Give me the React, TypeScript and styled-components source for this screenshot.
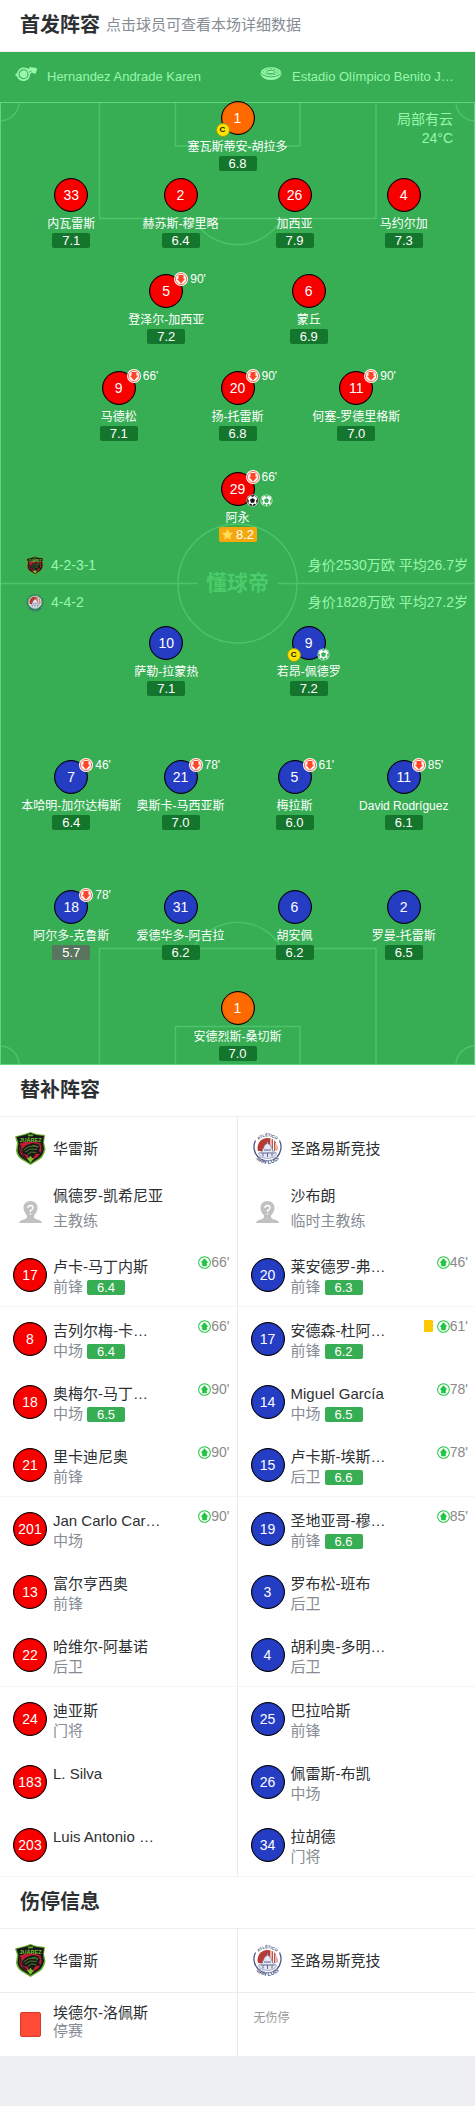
import React from 'react';
import styled, { createGlobalStyle } from 'styled-components';

const GlobalStyle = createGlobalStyle`
  * { box-sizing: border-box; }
  html { background: #eeeff1; }
  body {
    margin: 0;
    font-family: "Liberation Sans", "Noto Sans CJK SC", sans-serif;
    color: #2d3033;
  }
  h2, p, ul { margin: 0; padding: 0; }
  ul { list-style: none; }
  a { color: inherit; text-decoration: none; }
  svg { display: block; flex: none; }
`;

const Page = styled.main`
  background: #fff;
`;

/* ---------- section headings ---------- */

const SectionHead = styled.header`
  display: flex;
  align-items: center;
  gap: 6px;
  height: 52px;
  padding: 0 20px 2px;
  border-bottom: 1px solid #eeeeee;
`;

const Title = styled.h2`
  font-size: 20px;
  line-height: 28px;
  font-weight: 700;
`;

const Hint = styled.p`
  font-size: 15px;
  line-height: 20px;
  color: #868c94;
`;

/* ---------- pitch ---------- */

const PitchPanel = styled.section`
  background: #37ae54;
  color: #fff;
`;

const MatchBar = styled.div`
  display: grid;
  grid-template-columns: 245fr 230fr;
  height: 49px;
  color: #98f7ac;
`;

const MatchFact = styled.div`
  display: flex;
  align-items: center;
  gap: 10px;
  padding-left: 15px;
  min-width: 0;
  font-size: 13px;
  line-height: 18px;
  white-space: nowrap;

  svg { margin-bottom: 6px; }
`;

const Field = styled.div`
  position: relative;
  padding-bottom: 4px;
`;

const Markings = styled.svg`
  position: absolute;
  inset: 0;
  width: 100%;
  height: 100%;
`;

const Weather = styled.p`
  position: absolute;
  top: 9px;
  right: 22px;
  font-size: 14px;
  line-height: 19px;
  text-align: right;
  color: #98f7ac;
`;

const Watermark = styled.span`
  position: absolute;
  top: 50%;
  left: 50%;
  transform: translate(-50%, -50%);
  font-size: 21px;
  line-height: 24px;
  font-weight: 700;
  color: #4bcb69;
`;

const Half = styled.div`
  position: relative;
`;

const TeamLine = styled.div<{ $before: number }>`
  display: flex;
  align-items: center;
  gap: 7px;
  height: 20px;
  margin-top: ${(p) => p.$before}px;
  padding: 0 7px 0 26px;
  font-size: 14px;
  line-height: 20px;
  color: #98f7ac;
`;

const TeamValue = styled.span`
  margin-left: auto;
`;

const spotWidth: Record<number, number> = { 1: 40, 2: 30, 3: 25, 4: 23 };

const Line = styled.ul<{ $before: number; $count: number }>`
  display: flex;
  justify-content: center;
  margin-top: ${(p) => p.$before}px;

  > li { width: ${(p) => spotWidth[p.$count]}%; }
  > li:nth-child(3):nth-last-child(2) { margin-left: 1%; }
`;

const Spot = styled.a`
  display: flex;
  flex-direction: column;
  align-items: center;
  white-space: nowrap;
`;

const shirtColors = { red: '#f80000', blue: '#253dc3', keeper: '#ff6a00' };
type Shirt = keyof typeof shirtColors;

const Disc = styled.span<{ $shirt: Shirt }>`
  position: relative;
  display: flex;
  flex: none;
  align-items: center;
  justify-content: center;
  width: 34px;
  height: 34px;
  border: 1px solid #000;
  border-radius: 50%;
  background: ${(p) => shirtColors[p.$shirt]};
  box-shadow: inset 0 0 1px #000;
  color: #fff;
  font-size: 14px;
  line-height: 16px;
`;

const SpotName = styled.span`
  padding-top: 3px;
  font-size: 12px;
  line-height: 18px;
`;

const ratingColors = { pitch: '#14752c', low: '#59755f', best: '#f5a80c', bench: '#37ae54' };
type RatingTone = keyof typeof ratingColors;

const Rating = styled.span<{ $tone: RatingTone }>`
  display: flex;
  align-items: center;
  justify-content: center;
  gap: 2px;
  width: 38px;
  height: 15px;
  border-radius: 2px;
  background: ${(p) => ratingColors[p.$tone]};
  color: #fff;
  font-size: 13px;
  line-height: 15px;
`;

const OffMark = styled.span`
  position: absolute;
  top: -3px;
  left: 24px;
  display: flex;
  align-items: center;
  gap: 2px;
  font-size: 12px;
  line-height: 14px;
`;

const CaptainMark = styled.span`
  position: absolute;
  top: 21px;
  left: -6px;
  width: 14px;
  height: 14px;
  border: 1px solid #9b9a10;
  border-radius: 50%;
  background: #ffe300;
  color: #111;
  font-size: 8px;
  line-height: 12px;
  font-weight: 700;
  text-align: center;
`;

const BallMarks = styled.span`
  position: absolute;
  top: 21px;
  left: 24px;
  display: flex;
  gap: 1px;
`;

/* ---------- bench and absences ---------- */

const Columns = styled.div`
  display: grid;
  grid-template-columns: 1fr 1fr;
`;

const Column = styled.ul`
  min-width: 0;

  &:first-child { border-right: 1px solid #ebebeb; }
`;

const BenchItem = styled.li`
  &:nth-child(3n) { border-bottom: 1px solid #f5f5f6; }
`;

const AbsenceItem = styled.li`
  &:first-child { border-bottom: 1px solid #ebebeb; }
`;

const Row = styled.div`
  display: flex;
  align-items: center;
  gap: 6px;
  height: 63px;
  padding: 0 7px 0 13px;
  white-space: nowrap;
`;

const IconSlot = styled.span`
  display: flex;
  flex: none;
  justify-content: center;
  width: 34px;
`;

const Lines = styled.div<{ $pitch: number; $top?: number }>`
  align-self: ${(p) => (p.$top ? 'flex-start' : 'center')};
  padding-top: ${(p) => p.$top ?? 0}px;
  font-size: 15px;
  line-height: ${(p) => p.$pitch}px;
`;

const Role = styled.div`
  display: flex;
  align-items: center;
  gap: 4px;
  color: #868c94;
`;

const BenchLines = styled(Lines)`
  ${Role} { line-height: 20px; }
`;

const Events = styled.div`
  display: flex;
  align-self: flex-start;
  align-items: center;
  margin: 11px 0 0 auto;
  color: #8a8a8a;
  font-size: 14px;
  line-height: 16px;
`;

const YellowCard = styled.i`
  width: 9px;
  height: 12px;
  margin-right: 4px;
  border-radius: 1px;
  background: #ffc900;
`;

const RedCard = styled.i`
  width: 21px;
  height: 25px;
  border: 1px solid #d93a28;
  border-radius: 2px;
  background: #ff4a35;
`;

const NoAbsence = styled.p`
  padding: 16px 0 0 16px;
  font-size: 12px;
  line-height: 18px;
  color: #999;
`;

/* ---------- drawings ---------- */

const Swap = ({ dir, size }: { dir: 'up' | 'down'; size: number }) => {
  const tint = dir === 'up' ? '#22c443' : '#ff4527';
  return (
    <svg width={size} height={size} viewBox="0 0 14 14" aria-hidden="true">
      <circle cx="7" cy="7" r="7" fill="#fff" />
      <circle cx="7" cy="7" r={dir === 'up' ? 6.3 : 5.6} fill="none" stroke={tint} strokeWidth={dir === 'up' ? 1.1 : 0.8} />
      <path
        d="M7 2.5 11.2 7.2H9.5V11H4.5V7.2H2.8Z"
        fill={tint}
        transform={dir === 'down' ? 'rotate(180 7 7)' : undefined}
      />
    </svg>
  );
};

const Ball = ({ ink }: { ink: string }) => (
  <svg width="13" height="13" viewBox="0 0 26 26" aria-hidden="true">
    <circle cx="13" cy="13" r="12" fill="#fff" />
    <circle cx="13" cy="13" r="10.6" fill="none" stroke={ink} strokeWidth="1.2" />
    <g fill={ink}>
      <path d="M13 8 18 11.600 16.200 17.400H9.800L8 11.600Z" />
      <path d="M8.500 3.600Q13 1.500 17.500 3.600L13 6Z" />
      <path d="M23.400 9Q24.300 14 21.500 18.500L20 13.500Z" />
      <path d="M2.600 9Q1.700 14 4.500 18.500L6 13.500Z" />
      <path d="M7 21.500 8 18.800 12 21 11.500 23.600Q9 23.300 7 21.500Z" />
      <path d="M19 21.500 18 18.800 14 21 14.500 23.600Q17 23.300 19 21.500Z" />
    </g>
  </svg>
);

const Star = () => (
  <svg width="13" height="13" viewBox="0 0 26 26" aria-hidden="true">
    <path
      d="M13 1 16.600 8.600 25 9.700 18.900 15.500 20.400 24 13 20 5.600 24 7.100 15.500 1 9.700 9.400 8.600Z"
      fill="#ffdf55"
      stroke="#ff9d1c"
      strokeWidth="1"
      strokeLinejoin="round"
    />
  </svg>
);

const Whistle = () => (
  <svg width="22" height="14" viewBox="0 0 44 28" aria-hidden="true">
    <path d="M17 1C23 1 26 4 28 4L29 0 43 2 44 5 41 14 33 11 30 15C30 23 24 28 17 28 11 28 6 25 4 19L0 16 4 12C6 5 11 1 17 1Z" fill="#98f7ac" />
    <circle cx="17" cy="14.500" r="9" fill="none" stroke="#37ae54" strokeWidth="2.200" />
    <path d="M28 10 33 8" stroke="#37ae54" strokeWidth="1.500" />
  </svg>
);

const Stadium = () => (
  <svg width="22" height="13" viewBox="0 0 44 26" aria-hidden="true">
    <path d="M0 11 7 17Q22 24 37 17L44 11 42 17Q35 26 22 26 9 26 2 17Z" fill="#98f7ac" />
    <ellipse cx="22" cy="10" rx="20" ry="9.500" fill="#98f7ac" />
    <ellipse cx="22" cy="9.500" rx="15" ry="6" fill="none" stroke="#37ae54" strokeWidth="1.400" strokeDasharray="6 2" />
    <ellipse cx="22" cy="10" rx="9" ry="3.400" fill="none" stroke="#37ae54" strokeWidth="1.800" />
    <path d="M2 14Q22 26 42 14" fill="none" stroke="#37ae54" strokeWidth="1.200" />
  </svg>
);

const JuarezCrest = ({ width, height }: { width: number; height: number }) => (
  <svg width={width} height={height} viewBox="0 0 62 66" preserveAspectRatio="none" aria-hidden="true">
    <path d="M31 0 43 4 60 6 58 20 61 34Q58 52 44 58L31 66 18 58Q4 52 2 38L4 22 0 9 19 4Z" fill="#66ad25" />
    <path d="M31 2 42 6 58 8 56 21 58 34Q55 50 42 56L31 63 20 56Q7 50 5 37L7 22 3 10 20 6Z" fill="#17191a" />
    <path d="M10 23Q31 15 52 23L53 36Q50 48 40 53L31 58 22 53Q10 47 9 36Z" fill="#c51c35" />
    <path d="M14 34 22 27 34 22 46 24 50 30 48 38 52 44 42 43 36 52 31 58 26 47 15 42Z" fill="#17191a" />
    <path d="M17 36 28 29 41 28M20 40 31 34 44 35M25 45 33 40 42 41M35 27 46 29 43 32" fill="none" stroke="#66ad25" strokeWidth="1.400" />
    <path d="M11 26 12 39 22 50M51 26 49 24M14 46 24 52" fill="none" stroke="#17191a" strokeWidth="2" />
    <path d="M31 47 34 52 38 53 31 62 24 53 28 52Z" fill="#76c52e" />
    <path d="M25 5H37L35 9H27Z" fill="#66ad25" />
    <path d="M7 13Q31 5 55 13V21Q31 13 7 21Z" fill="#17191a" />
    <text x="31" y="20" textAnchor="middle" fontSize="11" fontWeight="700" fontFamily="Liberation Sans" fill="#7cc62f">JUÁREZ</text>
  </svg>
);

const SanLuisCrest = ({ width, height }: { width: number; height: number }) => (
  <svg width={width} height={height} viewBox="0 0 62 66" preserveAspectRatio="none" aria-hidden="true">
    <defs>
      <path id="crest-top" d="M8 24A25 25 0 0 1 54 24" />
      <path id="crest-bottom" d="M3 46A31 31 0 0 0 59 46" />
    </defs>
    <circle cx="31" cy="32" r="22" fill="#fff" />
    <path d="M31 12A20 20 0 0 1 50 38H12A20 20 0 0 1 31 12Z" fill="#b83a32" />
    <path d="M38 13V38M43 16V38M48 22V38" stroke="#fff" strokeWidth="2.500" />
    <path d="M31 16 32 23Q39 26 39 33H41V38L49 42Q47 52 31 53 15 52 13 42L21 38V33H23Q23 26 30 23Z" fill="#e7e9f2" stroke="#57608c" strokeWidth="1" />
    <path d="M31 42V50M24 36H38M17 42H45M22 43V49M40 43V49" stroke="#4c5684" strokeWidth="1.800" />
    <path d="M7 17A29 29 0 0 0 12 50M55 17A29 29 0 0 1 50 50" fill="none" stroke="#414c80" strokeWidth="2.400" />
    <path d="M11 49A27 27 0 0 0 51 49" fill="none" stroke="#414c80" strokeWidth="1.200" />
    <g fontFamily="Liberation Sans" fontWeight="700" fill="#414c80" textAnchor="middle">
      <text fontSize="8"><textPath href="#crest-top" startOffset="50%">ATLÉTICO</textPath></text>
      <text fontSize="11"><textPath href="#crest-bottom" startOffset="50%">SAN LUIS</textPath></text>
    </g>
  </svg>
);

const CoachFigure = () => (
  <svg width="23" height="22" viewBox="0 0 46 44" aria-hidden="true">
    <path d="M23 0C32 0 37 6 37 14 37 21 33 25 30 29V33Q32 36 40 38 46 40 46 44H0Q0 40 6 38 14 36 16 33V29C13 25 9 21 9 14 9 6 14 0 23 0Z" fill="#c1c1c1" />
    <path d="M18 14Q18 9 23 9T28 14Q28 17 23 19V22" fill="none" stroke="#fff" strokeWidth="2.800" />
    <circle cx="23" cy="26" r="1.700" fill="#fff" />
  </svg>
);

const FieldMarkings = () => (
  <Markings viewBox="0 0 475 964" preserveAspectRatio="none" aria-hidden="true">
    <g fill="none" stroke="#4cc469" strokeWidth="1.400">
      <path d="M99.500 1.500V117.500H376V1.500M175.500 1.500V45H300V1.500M193 117.500A51 51 0 0 0 282 117.500" />
      <path d="M99.500 963V847.500H376V963M175.500 963V925.500H300V963M193 847.500A51 51 0 0 1 282 847.500" />
      <path d="M0 20A19 19 0 0 0 19 1.500M475 20A19 19 0 0 1 456 1.500M0 945A19 19 0 0 1 19 963M475 945A19 19 0 0 0 456 963" />
      <path d="M0 482.500H197.500M277.500 482.500H475" />
      <circle cx="237.500" cy="482.500" r="59.500" />
    </g>
    <rect x="0.500" y="1.500" width="474" height="962" fill="none" stroke="#5bd87c" />
  </Markings>
);

/* ---------- data ---------- */

type Player = {
  no: number;
  name: string;
  rating: string;
  tone?: RatingTone;
  off?: number;
  captain?: boolean;
  balls?: string[];
};
type FormationLine = { before: number; keeper?: boolean; players: Player[] };

const GOAL = '#151515';
const ASSIST = '#37ae54';

const homeLines: FormationLine[] = [
  { before: 0, keeper: true, players: [{ no: 1, name: '塞瓦斯蒂安-胡拉多', rating: '6.8', captain: true }] },
  {
    before: 7,
    players: [
      { no: 33, name: '内瓦雷斯', rating: '7.1' },
      { no: 2, name: '赫苏斯-穆里略', rating: '6.4' },
      { no: 26, name: '加西亚', rating: '7.9' },
      { no: 4, name: '马约尔加', rating: '7.3' },
    ],
  },
  {
    before: 26,
    players: [
      { no: 5, name: '登泽尔-加西亚', rating: '7.2', off: 90 },
      { no: 6, name: '蒙丘', rating: '6.9' },
    ],
  },
  {
    before: 27,
    players: [
      { no: 9, name: '马德松', rating: '7.1', off: 66 },
      { no: 20, name: '扬-托雷斯', rating: '6.8', off: 90 },
      { no: 11, name: '何塞-罗德里格斯', rating: '7.0', off: 90 },
    ],
  },
  { before: 31, players: [{ no: 29, name: '阿永', rating: '8.2', tone: 'best', off: 66, balls: [GOAL, ASSIST] }] },
];

const awayLines: FormationLine[] = [
  {
    before: 14,
    players: [
      { no: 10, name: '萨勒-拉蒙热', rating: '7.1' },
      { no: 9, name: '若昂-佩德罗', rating: '7.2', captain: true, balls: [ASSIST] },
    ],
  },
  {
    before: 64,
    players: [
      { no: 7, name: '本哈明-加尔达梅斯', rating: '6.4', off: 46 },
      { no: 21, name: '奥斯卡-马西亚斯', rating: '7.0', off: 78 },
      { no: 5, name: '梅拉斯', rating: '6.0', off: 61 },
      { no: 11, name: 'David Rodríguez', rating: '6.1', off: 85 },
    ],
  },
  {
    before: 60,
    players: [
      { no: 18, name: '阿尔多-克鲁斯', rating: '5.7', tone: 'low', off: 78 },
      { no: 31, name: '爱德华多-阿吉拉', rating: '6.2' },
      { no: 6, name: '胡安佩', rating: '6.2' },
      { no: 2, name: '罗曼-托雷斯', rating: '6.5' },
    ],
  },
  { before: 31, keeper: true, players: [{ no: 1, name: '安德烈斯-桑切斯', rating: '7.0' }] },
];

type Sub = { no: number; name: string; role?: string; rating?: string; on?: number; booked?: boolean };
type Bench = { team: string; crest: typeof JuarezCrest; coach: string; coachRole: string; shirt: Shirt; subs: Sub[] };

const benches: Bench[] = [
  {
    team: '华雷斯',
    crest: JuarezCrest,
    coach: '佩德罗-凯希尼亚',
    coachRole: '主教练',
    shirt: 'red',
    subs: [
      { no: 17, name: '卢卡-马丁内斯', role: '前锋', rating: '6.4', on: 66 },
      { no: 8, name: '吉列尔梅-卡…', role: '中场', rating: '6.4', on: 66 },
      { no: 18, name: '奥梅尔-马丁…', role: '中场', rating: '6.5', on: 90 },
      { no: 21, name: '里卡迪尼奥', role: '前锋', on: 90 },
      { no: 201, name: 'Jan Carlo Car…', role: '中场', on: 90 },
      { no: 13, name: '富尔亨西奥', role: '前锋' },
      { no: 22, name: '哈维尔-阿基诺', role: '后卫' },
      { no: 24, name: '迪亚斯', role: '门将' },
      { no: 183, name: 'L. Silva' },
      { no: 203, name: 'Luis Antonio …' },
    ],
  },
  {
    team: '圣路易斯竞技',
    crest: SanLuisCrest,
    coach: '沙布朗',
    coachRole: '临时主教练',
    shirt: 'blue',
    subs: [
      { no: 20, name: '莱安德罗-弗…', role: '前锋', rating: '6.3', on: 46 },
      { no: 17, name: '安德森-杜阿…', role: '前锋', rating: '6.2', on: 61, booked: true },
      { no: 14, name: 'Miguel García', role: '中场', rating: '6.5', on: 78 },
      { no: 15, name: '卢卡斯-埃斯…', role: '后卫', rating: '6.6', on: 78 },
      { no: 19, name: '圣地亚哥-穆…', role: '前锋', rating: '6.6', on: 85 },
      { no: 3, name: '罗布松-班布', role: '后卫' },
      { no: 4, name: '胡利奥-多明…', role: '后卫' },
      { no: 25, name: '巴拉哈斯', role: '前锋' },
      { no: 26, name: '佩雷斯-布凯', role: '中场' },
      { no: 34, name: '拉胡德', role: '门将' },
    ],
  },
];

/* ---------- parts ---------- */

const Formation = ({ lines, shirt }: { lines: FormationLine[]; shirt: Shirt }) => (
  <>
    {lines.map((line, i) => (
      <Line key={i} $before={line.before} $count={line.players.length}>
        {line.players.map((p) => (
          <li key={p.no}>
            <Spot href="#player">
              <Disc $shirt={line.keeper ? 'keeper' : shirt}>
                {p.no}
                {p.off && (
                  <OffMark>
                    <Swap dir="down" size={14} />
                    {p.off}'
                  </OffMark>
                )}
                {p.captain && <CaptainMark>C</CaptainMark>}
                {p.balls && (
                  <BallMarks>
                    {p.balls.map((ink) => (
                      <Ball key={ink} ink={ink} />
                    ))}
                  </BallMarks>
                )}
              </Disc>
              <SpotName>{p.name}</SpotName>
              <Rating $tone={p.tone ?? 'pitch'}>
                {p.tone === 'best' && <Star />}
                {p.rating}
              </Rating>
            </Spot>
          </li>
        ))}
      </Line>
    ))}
  </>
);

const TeamRow = ({ name, crest: Crest }: { name: string; crest: typeof JuarezCrest }) => (
  <Row>
    <IconSlot>
      <Crest width={31} height={33} />
    </IconSlot>
    <Lines $pitch={21}>{name}</Lines>
  </Row>
);

const BenchColumn = ({ bench }: { bench: Bench }) => (
  <Column>
    <BenchItem>
      <TeamRow name={bench.team} crest={bench.crest} />
    </BenchItem>
    <BenchItem>
      <Row>
        <IconSlot>
          <CoachFigure />
        </IconSlot>
        <Lines $pitch={25} $top={3}>
          {bench.coach}
          <Role>{bench.coachRole}</Role>
        </Lines>
      </Row>
    </BenchItem>
    {bench.subs.map((s) => (
      <BenchItem key={s.no}>
        <Row as="a" href="#player">
          <Disc $shirt={bench.shirt}>{s.no}</Disc>
          <BenchLines $pitch={21} $top={13}>
            {s.name}
            {s.role && (
              <Role>
                {s.role}
                {s.rating && <Rating $tone="bench">{s.rating}</Rating>}
              </Role>
            )}
          </BenchLines>
          {s.on && (
            <Events>
              {s.booked && <YellowCard />}
              <Swap dir="up" size={13} />
              {s.on}'
            </Events>
          )}
        </Row>
      </BenchItem>
    ))}
  </Column>
);

export default function App() {
  return (
    <Page>
      <GlobalStyle />
      <SectionHead>
        <Title>首发阵容</Title>
        <Hint>点击球员可查看本场详细数据</Hint>
      </SectionHead>
      <PitchPanel>
        <MatchBar>
          <MatchFact>
            <Whistle />
            Hernandez Andrade Karen
          </MatchFact>
          <MatchFact>
            <Stadium />
            Estadio Olímpico Benito J…
          </MatchFact>
        </MatchBar>
        <Field>
          <FieldMarkings />
          <Watermark>懂球帝</Watermark>
          <Weather>
            局部有云
            <br />
            24°C
          </Weather>
          <Half>
            <Formation lines={homeLines} shirt="red" />
            <TeamLine $before={13}>
              <JuarezCrest width={18} height={19} />
              4-2-3-1
              <TeamValue>身价2530万欧 平均26.7岁</TeamValue>
            </TeamLine>
          </Half>
          <Half>
            <TeamLine $before={17}>
              <SanLuisCrest width={18} height={19} />
              4-4-2
              <TeamValue>身价1828万欧 平均27.2岁</TeamValue>
            </TeamLine>
            <Formation lines={awayLines} shirt="blue" />
          </Half>
        </Field>
      </PitchPanel>

      <section>
        <SectionHead>
          <Title>替补阵容</Title>
        </SectionHead>
        <Columns>
          {benches.map((b) => (
            <BenchColumn key={b.team} bench={b} />
          ))}
        </Columns>
      </section>

      <section>
        <SectionHead>
          <Title>伤停信息</Title>
        </SectionHead>
        <Columns>
          <Column>
            <AbsenceItem>
              <TeamRow name="华雷斯" crest={JuarezCrest} />
            </AbsenceItem>
            <AbsenceItem>
              <Row>
                <IconSlot>
                  <RedCard />
                </IconSlot>
                <Lines $pitch={18} $top={11}>
                  埃德尔-洛佩斯
                  <Role>停赛</Role>
                </Lines>
              </Row>
            </AbsenceItem>
          </Column>
          <Column>
            <AbsenceItem>
              <TeamRow name="圣路易斯竞技" crest={SanLuisCrest} />
            </AbsenceItem>
            <AbsenceItem>
              <NoAbsence>无伤停</NoAbsence>
            </AbsenceItem>
          </Column>
        </Columns>
      </section>
    </Page>
  );
}
